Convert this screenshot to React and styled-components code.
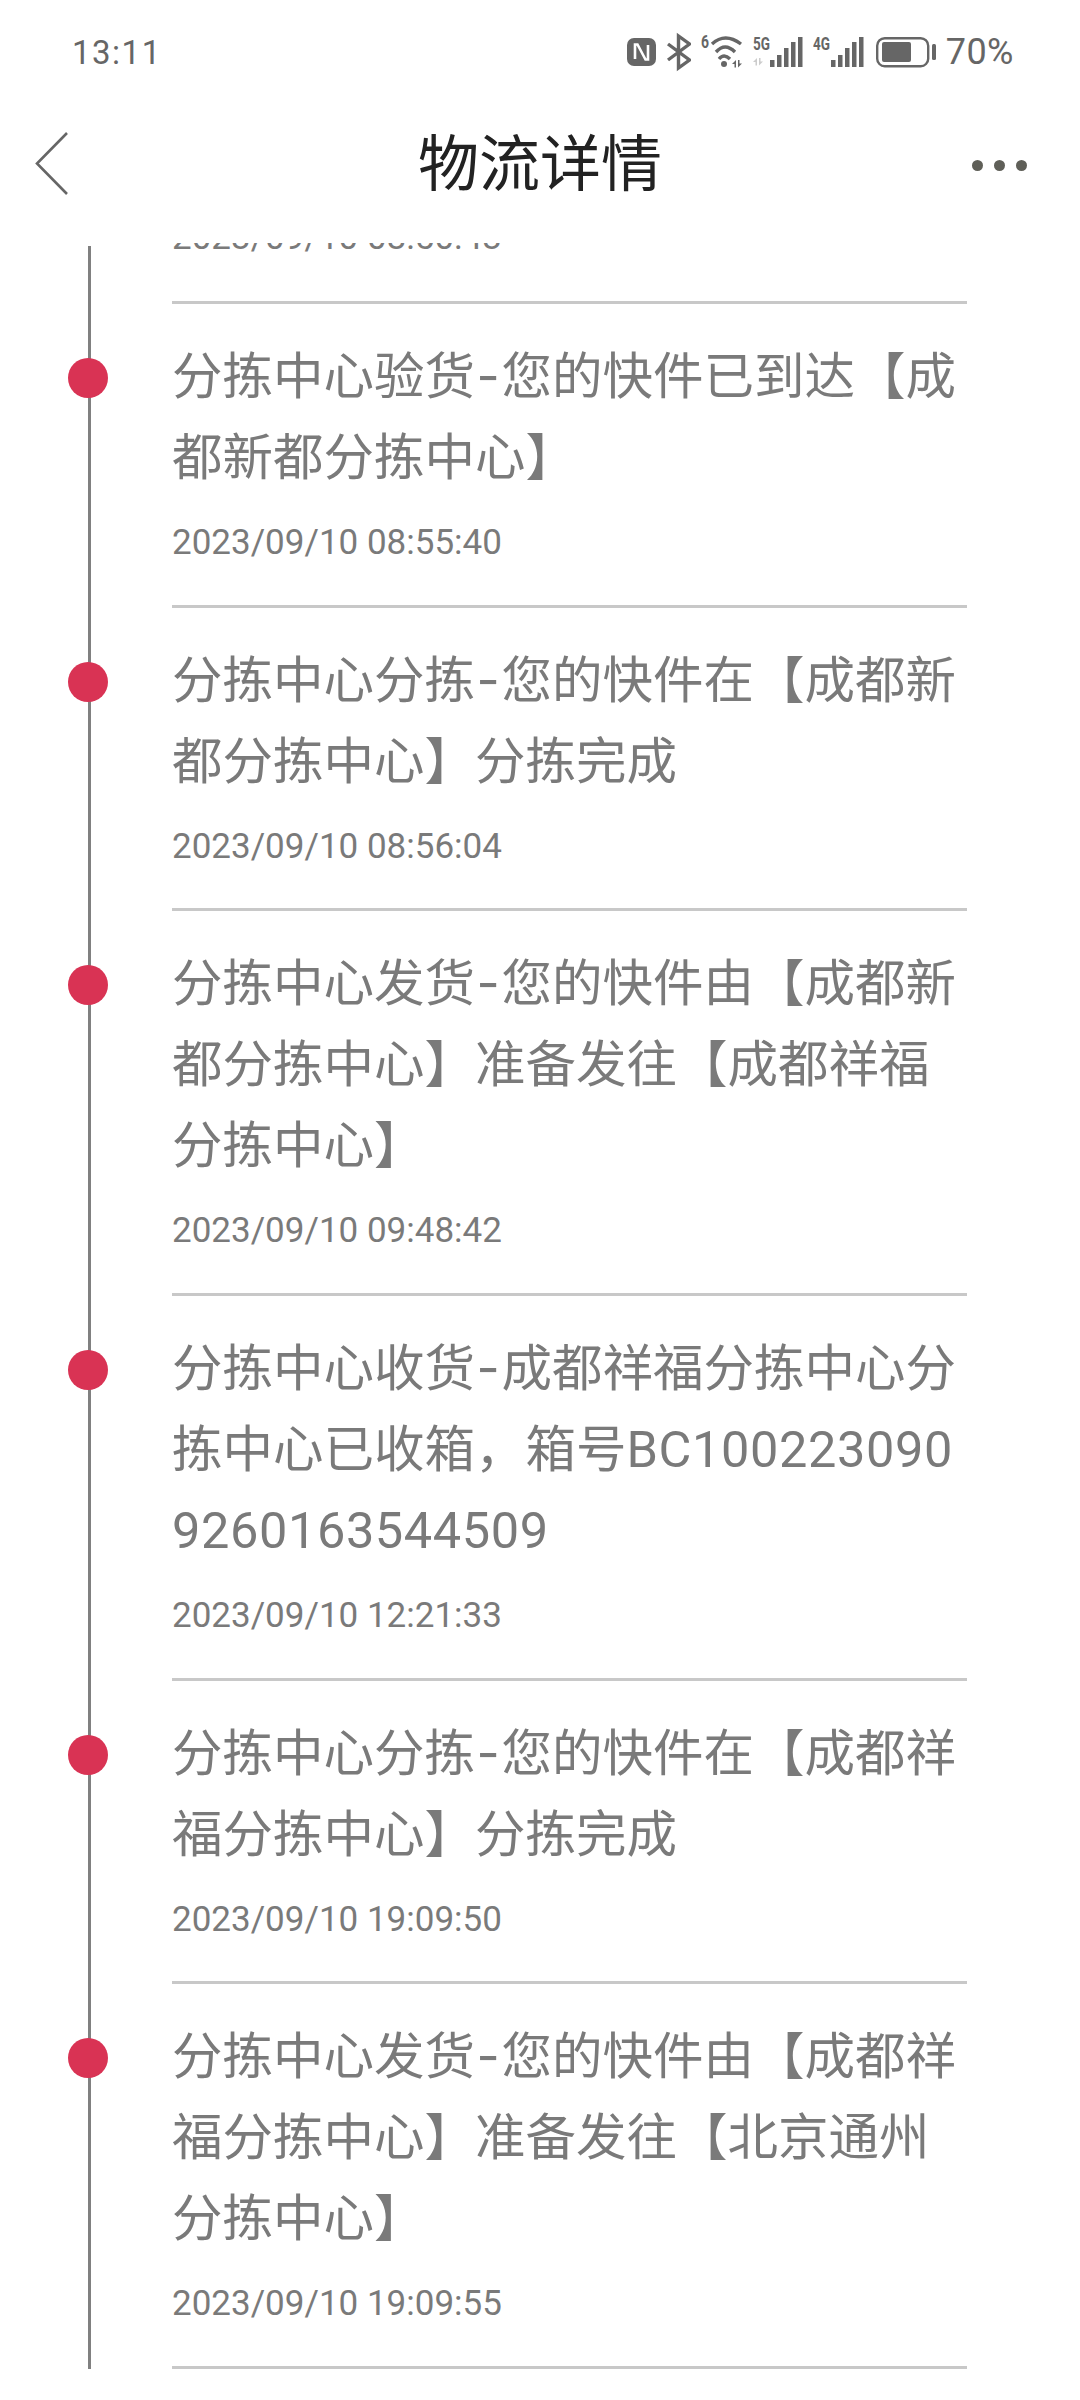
import React from 'react';
import styled, { createGlobalStyle } from 'styled-components';

const FONT = '"Roboto", "Noto Sans CJK SC", sans-serif';
const ICON = '#666';

const items = [
  { text: '', time: '2023/09/10 08:50:43' },
  { text: '分拣中心验货-您的快件已到达【成都新都分拣中心】', time: '2023/09/10 08:55:40' },
  { text: '分拣中心分拣-您的快件在【成都新都分拣中心】分拣完成', time: '2023/09/10 08:56:04' },
  { text: '分拣中心发货-您的快件由【成都新都分拣中心】准备发往【成都祥福分拣中心】', time: '2023/09/10 09:48:42' },
  { text: '分拣中心收货-成都祥福分拣中心分拣中心已收箱，箱号BC1002230909260163544509', time: '2023/09/10 12:21:33' },
  { text: '分拣中心分拣-您的快件在【成都祥福分拣中心】分拣完成', time: '2023/09/10 19:09:50' },
  { text: '分拣中心发货-您的快件由【成都祥福分拣中心】准备发往【北京通州分拣中心】', time: '2023/09/10 19:09:55' },
];

const barHeights = [7, 12, 19, 25, 30];

// up and down half arrows used next to wifi and 5G
const Arrows = ({ x, y, color }) => (
  <g transform={`translate(${x} ${y})`} fill={color}>
    <polygon points="0,4 4,0 4,7.5 2.5,7.5 2.5,4" />
    <polygon points="6,0 7.5,0 7.5,3.5 10,3.5 6,7.5" />
  </g>
);

const NetIcon = ({ label, width, barX, arrows }) => (
  <svg width={width} height="40" viewBox={`0 0 ${width} 40`}>
    <SmallLabel x="0" y="18" textLength="17" lengthAdjust="spacingAndGlyphs">{label}</SmallLabel>
    {arrows && <Arrows x={0} y={26} color="#ccc" />}
    {barHeights.map((h, i) => (
      <rect key={i} x={barX + i * 7} y={35 - h} width="4.5" height={h} fill={ICON} />
    ))}
  </svg>
);

// the hyphen and the long number sit a little wider than the fonts we have
const renderText = (text) =>
  text.split(/(-|[A-Z0-9]+)/).map((part, i) => {
    if (part === '-') return <Hyphen key={i}>-</Hyphen>;
    if (/^[A-Z0-9]+$/.test(part)) return <Latin key={i}>{part}</Latin>;
    return part;
  });

export default function App() {
  return (
    <>
      <GlobalStyle />
      <Page>
        <StatusBar>
          <Clock>13:11</Clock>
          <StatusIcons>
            <svg width="29" height="40" viewBox="0 0 29 40">
              <rect x="0" y="6" width="29" height="28" rx="7" fill={ICON} />
              <path d="M8 27V12.5H10.5L18.5 27.5H21V13" fill="none" stroke="#fff" strokeWidth="2.6" />
            </svg>
            <svg width="25" height="40" viewBox="0 0 25 40">
              <path d="M2 12L23.5 28L12.5 36V4L23.5 12L2 28" fill="none" stroke={ICON} strokeWidth="3.4" />
            </svg>
            <svg width="42" height="40" viewBox="0 0 42 40">
              <SmallLabel x="0" y="16" textLength="8" lengthAdjust="spacingAndGlyphs">6</SmallLabel>
              <path d="M11 12Q24 0 40 12M15 20Q24 10 34 20M18 27Q23 21 29 27" fill="none" stroke={ICON} strokeWidth="3.4" />
              <circle cx="23" cy="32" r="3" fill={ICON} />
              <Arrows x={31} y={28} color={ICON} />
            </svg>
            <NetIcon label="5G" width={50} barX={17} arrows />
            <NetIcon label="4G" width={51} barX={18} />
            <svg width="62" height="40" viewBox="0 0 62 40">
              <rect x="3.2" y="6.2" width="51" height="28" rx="7.5" fill="none" stroke={ICON} strokeWidth="2.4" />
              <rect x="8" y="10" width="29" height="20" rx="2" fill={ICON} />
              <rect x="58" y="12" width="4" height="16" rx="1.5" fill={ICON} />
            </svg>
            <Battery>70%</Battery>
          </StatusIcons>
        </StatusBar>
        <Header>
          <BackIcon width="33" height="64" viewBox="0 0 33 64">
            <path d="M32 1L2 31.5L32 62" fill="none" stroke={ICON} strokeWidth="2.6" />
          </BackIcon>
          <Title>物流详情</Title>
          <More>
            <Dot />
            <Dot />
            <Dot />
          </More>
        </Header>
        <Scroller>
          <List>
            <Rail />
            {items.map((item, i) => (
              <Row key={i} $clipped={!item.text}>
                {item.text && <Marker />}
                {item.text && <RowText>{renderText(item.text)}</RowText>}
                <RowTime>{item.time}</RowTime>
              </Row>
            ))}
          </List>
        </Scroller>
      </Page>
    </>
  );
}

const GlobalStyle = createGlobalStyle`
  * {
    box-sizing: border-box;
  }

  html, body {
    margin: 0;
    padding: 0;
    background: #fff;
  }
`;

const Page = styled.div`
  width: 1080px;
  height: 2400px;
  overflow: hidden;
  background: #fff;
  font-family: ${FONT};
  display: flex;
  flex-direction: column;
`;

const StatusBar = styled.div`
  height: 104px;
  flex: none;
  display: flex;
  justify-content: space-between;
  align-items: center;
  padding: 0 66px 0 72px;
  color: ${ICON};
`;

const Clock = styled.div`
  font-size: 33px;
  letter-spacing: 1.5px;
`;

const StatusIcons = styled.div`
  display: flex;
  align-items: center;
  gap: 10px;

  svg {
    display: block;
  }
`;

const SmallLabel = styled.text`
  font-family: ${FONT};
  font-size: 18px;
  font-weight: 700;
  fill: ${ICON};
`;

const Battery = styled.span`
  font-size: 36px;
  line-height: 40px;
  letter-spacing: 0.5px;
  color: ${ICON};
`;

const Header = styled.div`
  height: 126px;
  flex: none;
  display: grid;
  grid-template-columns: 1fr auto 1fr;
  align-items: center;
  padding-bottom: 4px;
  margin-bottom: 13px;
`;

const BackIcon = styled.svg`
  display: block;
  margin: 0 0 2px 35px;
`;

const Title = styled.div`
  font-size: 61px;
  line-height: 72px;
  color: #222;
`;

const More = styled.div`
  display: flex;
  gap: 11px;
  justify-self: end;
  margin-right: 53px;
`;

const Dot = styled.span`
  width: 11px;
  height: 11px;
  border-radius: 50%;
  background: #5f5f58;
`;

const Scroller = styled.div`
  flex: 1;
  overflow: hidden;
`;

const List = styled.div`
  position: relative;
  margin: -79px 0 0 172px;
  width: 795px;
`;

const Rail = styled.div`
  position: absolute;
  left: -84px;
  top: 82px;
  height: 2123px;
  width: 3px;
  background: #808080;
`;

const Row = styled.div`
  position: relative;
  border-bottom: 3px solid #c8c8c8;
  padding: ${(p) => (p.$clipped ? '29px 0 43px' : '32px 0 41.67px')};
`;

const Marker = styled.div`
  position: absolute;
  left: -104px;
  top: 54px;
  width: 40px;
  height: 40px;
  border-radius: 50%;
  background: #d93354;
`;

const RowText = styled.div`
  font-size: 50.5px;
  line-height: 81px;
  color: #7a7a7a;
  word-break: break-all;
`;

const Hyphen = styled.span`
  margin: 0 1.6px;
  line-height: 0;
  font-family: "Inter", sans-serif;
`;

const Latin = styled.span`
  letter-spacing: 0.6px;
`;

const RowTime = styled.div`
  margin-top: 25px;
  font-size: 35px;
  line-height: 40px;
  color: #7a7a7a;
`;
